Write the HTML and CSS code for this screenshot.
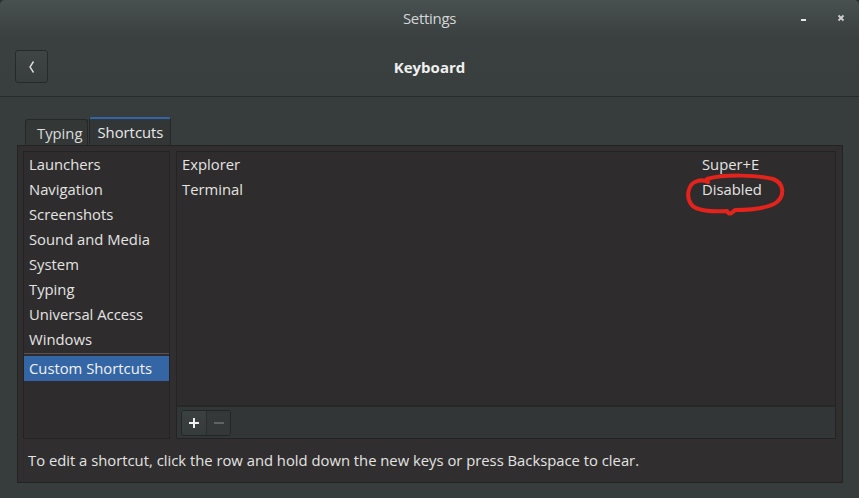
FILE: index.html
```html
<!DOCTYPE html>
<html>
<head>
<meta charset="utf-8">
<link rel="stylesheet" href="styles.css">
</head>
<body>
<div class="window">
  <header class="header">
    <div class="titlebar">
      <span class="title">Settings</span>
      <div class="wm-buttons">
        <svg class="wm-min" width="8" height="8" viewBox="0 0 8 8"><rect x="1" y="5" width="5" height="2" fill="#e6e6e6"/></svg>
        <svg class="wm-close" width="8" height="8" viewBox="0 0 8 8"><path d="M1.5 1.5 L6.5 6.5 M6.5 1.5 L1.5 6.5" stroke="#d0d0d0" stroke-width="1.8"/></svg>
      </div>
    </div>
    <div class="navbar">
      <button class="back">
        <svg width="10" height="16" viewBox="0 0 10 16"><path d="M6.5 2.5 L3 8 L6.5 13.5" fill="none" stroke="#dcdcdc" stroke-width="1.4"/></svg>
      </button>
      <span class="page-title">Keyboard</span>
    </div>
  </header>
  <main class="content">
    <div class="tabs">
      <div class="tab">Typing</div>
      <div class="tab active">Shortcuts</div>
    </div>
    <section class="notebook">
      <div class="panes">
        <ul class="categories">
          <li>Launchers</li>
          <li>Navigation</li>
          <li>Screenshots</li>
          <li>Sound and Media</li>
          <li>System</li>
          <li>Typing</li>
          <li>Universal Access</li>
          <li>Windows</li>
          <li class="sep"></li>
          <li class="selected">Custom Shortcuts</li>
        </ul>
        <div class="shortcuts">
          <div class="rows">
            <div class="row"><span class="name">Explorer</span><span class="accel">Super+E</span></div>
            <div class="row"><span class="name">Terminal</span><span class="accel">Disabled</span></div>
          </div>
          <div class="toolbar">
            <div class="btn-group">
              <button class="tb-btn">
                <svg width="12" height="12" viewBox="0 0 12 12"><path d="M6 1 V11 M1 6 H11" stroke="#f0f0f0" stroke-width="2"/></svg>
              </button>
              <button class="tb-btn disabled">
                <svg width="12" height="12" viewBox="0 0 12 12"><path d="M1 6 H11" stroke="#5e6363" stroke-width="2"/></svg>
              </button>
            </div>
          </div>
          <svg class="scribble" width="104" height="48" viewBox="0 0 104 48">
            <path d="M22 6 C40 1 72 2 88 6 C99 10 100 22 92 29 C84 35 66 37 50 37 C46 41 44 42 42 38 C28 39 10 38 6 31 C1 24 3 12 10 9 C14 7 19 7 23 9" fill="none" stroke="#e3231c" stroke-width="4" stroke-linecap="round" stroke-linejoin="round"/>
          </svg>
        </div>
      </div>
      <p class="hint">To edit a shortcut, click the row and hold down the new keys or press Backspace to clear.</p>
    </section>
  </main>
</div>
</body>
</html>
```
FILE: styles.css
```css
* { box-sizing: border-box; }
html, body { margin: 0; padding: 0; }
body {
  width: 859px;
  height: 498px;
  overflow: hidden;
  background: #2a2e2e;
  font-family: "Open Sans", "Noto Sans", sans-serif;
  font-size: 14.8px;
  color: #e4e4e4;
}
.window {
  width: 859px;
  height: 498px;
  background: #373c3c;
  border-radius: 5px 5px 0 0;
  overflow: hidden;
  display: flex;
  flex-direction: column;
}
.header {
  height: 97px;
  background: linear-gradient(#485050, #3a3f3f 40%, #393e3e);
  border-bottom: 1px solid #282c2c;
  display: flex;
  flex-direction: column;
}
.titlebar {
  height: 36px;
  display: flex;
  align-items: center;
  justify-content: center;
  position: relative;
}
.title {
  font-size: 15px;
  color: #d2d6d6;
  letter-spacing: -0.3px;
}
.wm-buttons {
  position: absolute;
  right: 14px;
  top: 14px;
  display: flex;
  gap: 29px;
}
.navbar {
  flex: 1;
  display: flex;
  align-items: center;
  justify-content: center;
  position: relative;
}
.back {
  position: absolute;
  left: 15px;
  top: 14px;
  width: 33px;
  height: 33px;
  border: 1px solid #262a2a;
  border-radius: 3px;
  background: linear-gradient(#3f4545, #383d3d);
  display: flex;
  align-items: center;
  justify-content: center;
  padding: 0;
}
.page-title {
  font-weight: bold;
  font-size: 15px;
  color: #eef0f0;
  margin-top: 1px;
}
.content {
  flex: 1;
  padding: 20px 16px 15px 17px;
  display: flex;
  flex-direction: column;
}
.tabs {
  display: flex;
  padding-left: 8px;
  height: 28px;
  align-items: flex-end;
}
.tab {
  height: 26px;
  padding: 0 5px 0 11px;
  border: 1px solid #262828;
  border-bottom: none;
  border-radius: 3px 3px 0 0;
  background: #333837;
  display: flex;
  align-items: center;
  color: #dcdcdc;
}
.tab.active {
  height: 28px;
  padding: 0 7px;
  background: #333636;
  border-top: 2px solid #3465a4;
  color: #eaeaea;
  margin-left: 1px;
}
.notebook {
  flex: 1;
  background: #302e2e;
  border: 1px solid #232323;
  padding: 5px 6px 0 5px;
  display: flex;
  flex-direction: column;
}
.panes {
  height: 288px;
  display: flex;
  gap: 6px;
}
.categories {
  list-style: none;
  margin: 0;
  padding: 0;
  width: 147px;
  background: #2e2c2c;
  border: 1px solid #242323;
}
.categories li {
  height: 25px;
  line-height: 25px;
  padding-left: 5px;
  white-space: nowrap;
}
.categories li.sep {
  height: 1px;
  margin: 1px 0 2px;
  background: #555;
}
.categories li.selected {
  background: #3465a4;
  color: #f2f2f2;
}
.shortcuts {
  flex: 1;
  position: relative;
  background: #2e2c2c;
  border: 1px solid #242323;
  display: flex;
  flex-direction: column;
}
.rows {
  flex: 1;
}
.row {
  height: 25px;
  line-height: 25px;
  display: flex;
  padding-left: 5px;
}
.row .name { flex: 1; }
.row .accel { width: 133px; }
.toolbar {
  height: 33px;
  background: #323636;
  border-top: 2px solid #262828;
  padding: 3px 4px;
}
.btn-group {
  display: inline-flex;
  border: 1px solid #232626;
  border-radius: 3px;
  overflow: hidden;
}
.tb-btn {
  width: 24px;
  height: 24px;
  padding: 0;
  border: none;
  background: linear-gradient(#3b4141, #353a3a);
  display: flex;
  align-items: center;
  justify-content: center;
}
.tb-btn + .tb-btn { border-left: 1px solid #292d2d; }
.tb-btn.disabled { background: #343838; }
.scribble {
  position: absolute;
  left: 508px;
  top: 21px;
}
.hint {
  margin: 0;
  flex: 1;
  display: flex;
  align-items: center;
  padding-left: 5px;
  padding-bottom: 1px;
  color: #e4e4e4;
}
```
